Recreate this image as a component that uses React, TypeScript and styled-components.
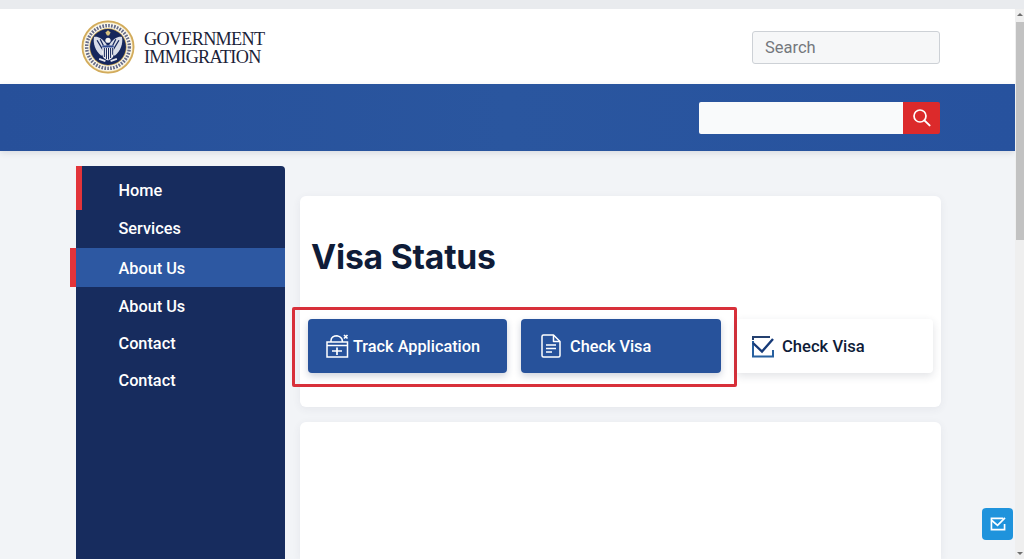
import React from "react";
import styled, { createGlobalStyle } from "styled-components";

const Global = createGlobalStyle`
  html, body { margin: 0; padding: 0; height: 100%; overflow: hidden; background: #f2f4f7; }
  * { box-sizing: border-box; }
  body { font-family: Roboto, "Liberation Sans", sans-serif; }
`;

const Shell = styled.div`
  width: 1024px; height: 559px; display: flex; flex-direction: column; overflow: hidden; position: relative;
  background: #f2f4f7;
`;
const TopStrip = styled.div`height: 9px; flex: none; background: #e9ebee;`;
const Body = styled.div`flex: 1; display: flex; min-height: 0;`;
const Page = styled.div`flex: 1; min-width: 0; display: flex; flex-direction: column; background: #f2f4f7;`;

const Header = styled.header`
  height: 75px; flex: none; background: #fff; display: flex; align-items: center; justify-content: space-between;
  padding: 0 75px 0 81px;
`;
const Brand = styled.div`display: flex; align-items: center; gap: 9px;`;
const BrandText = styled.div`
  font-family: "Liberation Serif", serif; font-size: 18.2px; line-height: 18px; color: #1a2238; letter-spacing: -0.7px;
  padding-top: 2px;
`;
const TopSearch = styled.input`
  width: 188px; height: 33px; margin-top: 2px; background: #f6f7f8; border: 1px solid #cdd1d6; border-radius: 3px; padding: 0 12px;
  font: 400 16.5px Roboto, sans-serif; outline: none;
  &::placeholder { color: #74787d; opacity: 1; }
`;
const BlueBar = styled.div`
  height: 67px; flex: none; display: flex; align-items: center; justify-content: flex-end; padding: 0 75px 0 0;
  background: linear-gradient(90deg, #27509a 0%, #2a569f 50%, #27529e 100%);
  box-shadow: 0 2px 6px rgba(40, 50, 70, .12);
  position: relative;
`;
const BarSearch = styled.div`display: flex; height: 32px;`;
const BarInput = styled.input`
  width: 204px; border: 0; background: #f9fafb; border-radius: 2px 0 0 2px; outline: none; padding: 0 10px;
`;
const BarButton = styled.button`
  width: 37px; border: 0; padding: 0; background: #dc2a2b; border-radius: 0 2px 2px 0; display: flex; align-items: center; justify-content: center;
`;

const Columns = styled.div`flex: 1; min-height: 0; display: flex; gap: 15px; padding: 0 74px 0 76px;`;
const Sidebar = styled.nav`
  width: 209px; flex: none; margin-top: 15px; background: #172c5e; border-radius: 0 4px 0 0; position: relative;
  display: flex; flex-direction: column;
`;
const NavItem = styled.a<{ $active?: boolean; $mark?: boolean; $h: number; $lift: number }>`
  display: flex; align-items: center; height: ${p => p.$h}px;
  padding: ${p => (p.$mark ? "4px" : p.$active ? "1px" : "0")} 0 ${p => p.$lift}px 42.5px;
  font-size: 16.3px; font-weight: 500; color: #fff; position: relative;
  background: ${p => (p.$active ? "#2d58a2" : "transparent")};
  ${p => p.$mark && `&::before { content: ""; position: absolute; left: 0; top: 0; bottom: 0; width: 6px; background: #e2343a; }`}
  ${p => p.$active && `&::before { content: ""; position: absolute; left: -6px; top: 0; bottom: 0; width: 6px; background: #e2343a; }`}
`;
const Main = styled.main`flex: 1; min-width: 0; padding-top: 45px; display: flex; flex-direction: column; gap: 15px;`;
const Card = styled.section`
  background: #fff; border-radius: 6px; padding: 40px 8px 20px; box-shadow: 0 2px 8px rgba(50, 60, 80, .07);
`;
const EmptyCard = styled(Card)`flex: 1; border-radius: 6px 6px 0 0;`;
const Title = styled.h1`
  margin: 0 0 29px 3px; font: 700 33.7px/42px Inter, Roboto, sans-serif; color: #0f1c38; letter-spacing: -0.2px;
`;
const ActionRow = styled.div`display: flex; align-items: flex-start;`;
const Highlight = styled.div`
  display: flex; gap: 14px; height: 80px; align-items: flex-start; margin-left: -16px; padding: 9px 13px 0; border: 3px solid #d8303a; flex: none;
  border-radius: 2px;
`;
const Action = styled.button<{ $w: number; $pad: number; $gap: number }>`
  height: 54px; border: 0; border-radius: 4px; background: #27529b; color: #fff; display: flex; align-items: center;
  font: 500 16.3px Roboto, sans-serif; box-shadow: 0 3px 7px rgba(30, 50, 90, .22);
  width: ${p => p.$w}px;
  padding: 0 0 0 ${p => p.$pad}px; gap: ${p => p.$gap}px;
`;
const LightAction = styled.button`
  flex: 1; height: 54px; margin-top: 12px; border: 0; background: #fff; border-radius: 0 4px 4px 0; display: flex; align-items: center; gap: 8px; padding: 0 0 0 15px;
  font: 500 16.6px Roboto, sans-serif; color: #0f1c38; box-shadow: 0 3px 8px rgba(40, 50, 70, .14);
`;

const Scrollbar = styled.div`
  width: 9px; flex: none; background: #efefef; display: flex; flex-direction: column; align-items: center; justify-content: space-between; position: relative;
`;
const ArrowUp = styled.div`
  width: 0; height: 0; margin-top: 4px; border-left: 3px solid transparent; border-right: 3px solid transparent; border-bottom: 3px solid #6f6f6f;
`;
const ArrowDown = styled.div`
  width: 0; height: 0; margin-bottom: 4px; border-left: 3px solid transparent; border-right: 3px solid transparent; border-top: 3px solid #6f6f6f;
`;
const Thumb = styled.div`position: absolute; left: 1px; right: 0; top: 13px; height: 218px; background: #c2c2c2;`;
const Floating = styled.button`
  position: absolute; left: 982px; top: 508px; width: 31px; height: 32px; border: 0; padding: 0; border-radius: 4px;
  background: #1f93dc; display: flex; align-items: center; justify-content: center;
`;

const Seal = () => (
  <svg width="54" height="54" viewBox="0 0 110 110" aria-label="Seal">
    <circle cx="55" cy="55" r="54" fill="#f5e8c2" />
    <circle cx="55" cy="55" r="52" fill="none" stroke="#d2ab5c" strokeWidth="3.5" />
    <circle cx="55" cy="55" r="49" fill="#fbf8ee" />
    <circle cx="55" cy="55" r="43.5" fill="none" stroke="#2c3560" strokeWidth="7" strokeDasharray="3.4 2.6" opacity=".72" />
    <circle cx="55" cy="55" r="38" fill="#c9a757" />
    <circle cx="55" cy="55" r="36.5" fill="#16275c" />
    <g transform="translate(55 55) scale(1.06) translate(-55 -55)">
      <path d="M52 50 C44 38 34 34 28 36 C26 48 30 62 42 72 L50 66Z" fill="#d9dde8" />
      <path d="M58 50 C66 38 76 34 82 36 C84 48 80 62 68 72 L60 66Z" fill="#d9dde8" />
      <path d="M34 42 L46 62M40 40 L49 58M76 42 L64 62M70 40 L61 58" stroke="#16275c" strokeWidth="2.4" />
      <circle cx="55" cy="42" r="5" fill="#f2f2f2" />
      <path d="M44 52 H66 V68 C66 76 60 79 55 81 C50 79 44 76 44 68Z" fill="#f4f4f6" />
      <path d="M48 57 V74M52 57 V78M56 57 V79M60 57 V76M64 57 V70" stroke="#16275c" strokeWidth="2" />
      <path d="M44 52 H66 V56 H44Z" fill="#2f4a90" />
      <path d="M38 78 L50 82M72 78 L60 82" stroke="#e8e8ee" strokeWidth="3.5" />
      <path d="M50 27 L55 23 L60 27 L57 33 H53Z" fill="#d7c27e" />
    </g>
  </svg>
);

const SearchIcon = () => (
  <svg width="20" height="20" viewBox="0 0 20 20" fill="none" stroke="#fff" strokeWidth="1.7" strokeLinecap="round">
    <circle cx="8" cy="8" r="6" />
    <path d="M12.4 12.4 L17.6 17.4" strokeWidth="2" />
  </svg>
);
const TrackIcon = () => (
  <svg width="23" height="24" viewBox="0 0 23 24" fill="none" stroke="#fff" strokeWidth="1.5">
    <rect x="1" y="8" width="20.5" height="15" />
    <path d="M1 11.5 H21.5" />
    <path d="M5 8 V6.5 C5 3.5 8 1.7 11 1.7 L13.5 2.6 C15.4 3.5 16.5 5 16.5 8" />
    <path d="M18 1 L21.5 4.5 M21.5 1 L18 4.5" strokeWidth="1.7" />
    <path d="M11 13.5 V21 M6 17 H16" strokeWidth="1.7" />
  </svg>
);
const DocIcon = () => (
  <svg width="20" height="24" viewBox="0 0 20 24" fill="none" stroke="#fff" strokeWidth="1.5" strokeLinejoin="round">
    <path d="M1 2.5 Q1 1 2.5 1 H12.5 L19 7.5 V21.5 Q19 23 17.5 23 H2.5 Q1 23 1 21.5Z" />
    <path d="M12.5 1 V7.5 H19" />
    <path d="M5 11 H15 M5 14.5 H15 M5 18 H11" />
  </svg>
);
const CheckIcon = () => (
  <svg width="22" height="23" viewBox="0 0 22 23" fill="none" strokeWidth="2">
    <path d="M1 5 V2 H18" stroke="#24406f" />
    <path d="M1 6 V21.5 H21 V15" stroke="#27609f" />
    <path d="M1 8 L10 16.5 L21 4" stroke="#163a78" strokeWidth="2.4" />
  </svg>
);
const MailIcon = () => (
  <svg width="16" height="14" viewBox="0 0 18 16" fill="none" stroke="#fff" strokeWidth="1.9">
    <path d="M15 1.5 H1.5 V14.5 H16.5 V8" />
    <path d="M2 4 L8.5 9.5 L17 1" />
  </svg>
);

export default function App() {
  return (
    <Shell>
      <Global />
      <TopStrip />
      <Body>
        <Page>
          <Header>
            <Brand>
              <Seal />
              <BrandText>GOVERNMENT<br />IMMIGRATION</BrandText>
            </Brand>
            <TopSearch placeholder="Search" />
          </Header>
          <BlueBar>
            <BarSearch>
              <BarInput />
              <BarButton><SearchIcon /></BarButton>
            </BarSearch>
          </BlueBar>
          <Columns>
            <Sidebar>
              <NavItem $h={44} $lift={0} $mark>Home</NavItem>
              <NavItem $h={38} $lift={2}>Services</NavItem>
              <NavItem $h={39} $lift={0} $active>About Us</NavItem>
              <NavItem $h={38} $lift={0}>About Us</NavItem>
              <NavItem $h={37} $lift={1}>Contact</NavItem>
              <NavItem $h={37} $lift={1}>Contact</NavItem>
            </Sidebar>
            <Main>
              <Card>
                <Title>Visa Status</Title>
                <ActionRow>
                  <Highlight>
                    <Action $w={199} $pad={18} $gap={4}><TrackIcon />Track Application</Action>
                    <Action $w={200} $pad={20} $gap={9}><DocIcon />Check Visa</Action>
                  </Highlight>
                  <LightAction><CheckIcon />Check Visa</LightAction>
                </ActionRow>
              </Card>
              <EmptyCard />
            </Main>
          </Columns>
        </Page>
        <Scrollbar>
          <ArrowUp />
          <Thumb />
          <ArrowDown />
        </Scrollbar>
      </Body>
      <Floating><MailIcon /></Floating>
    </Shell>
  );
}
